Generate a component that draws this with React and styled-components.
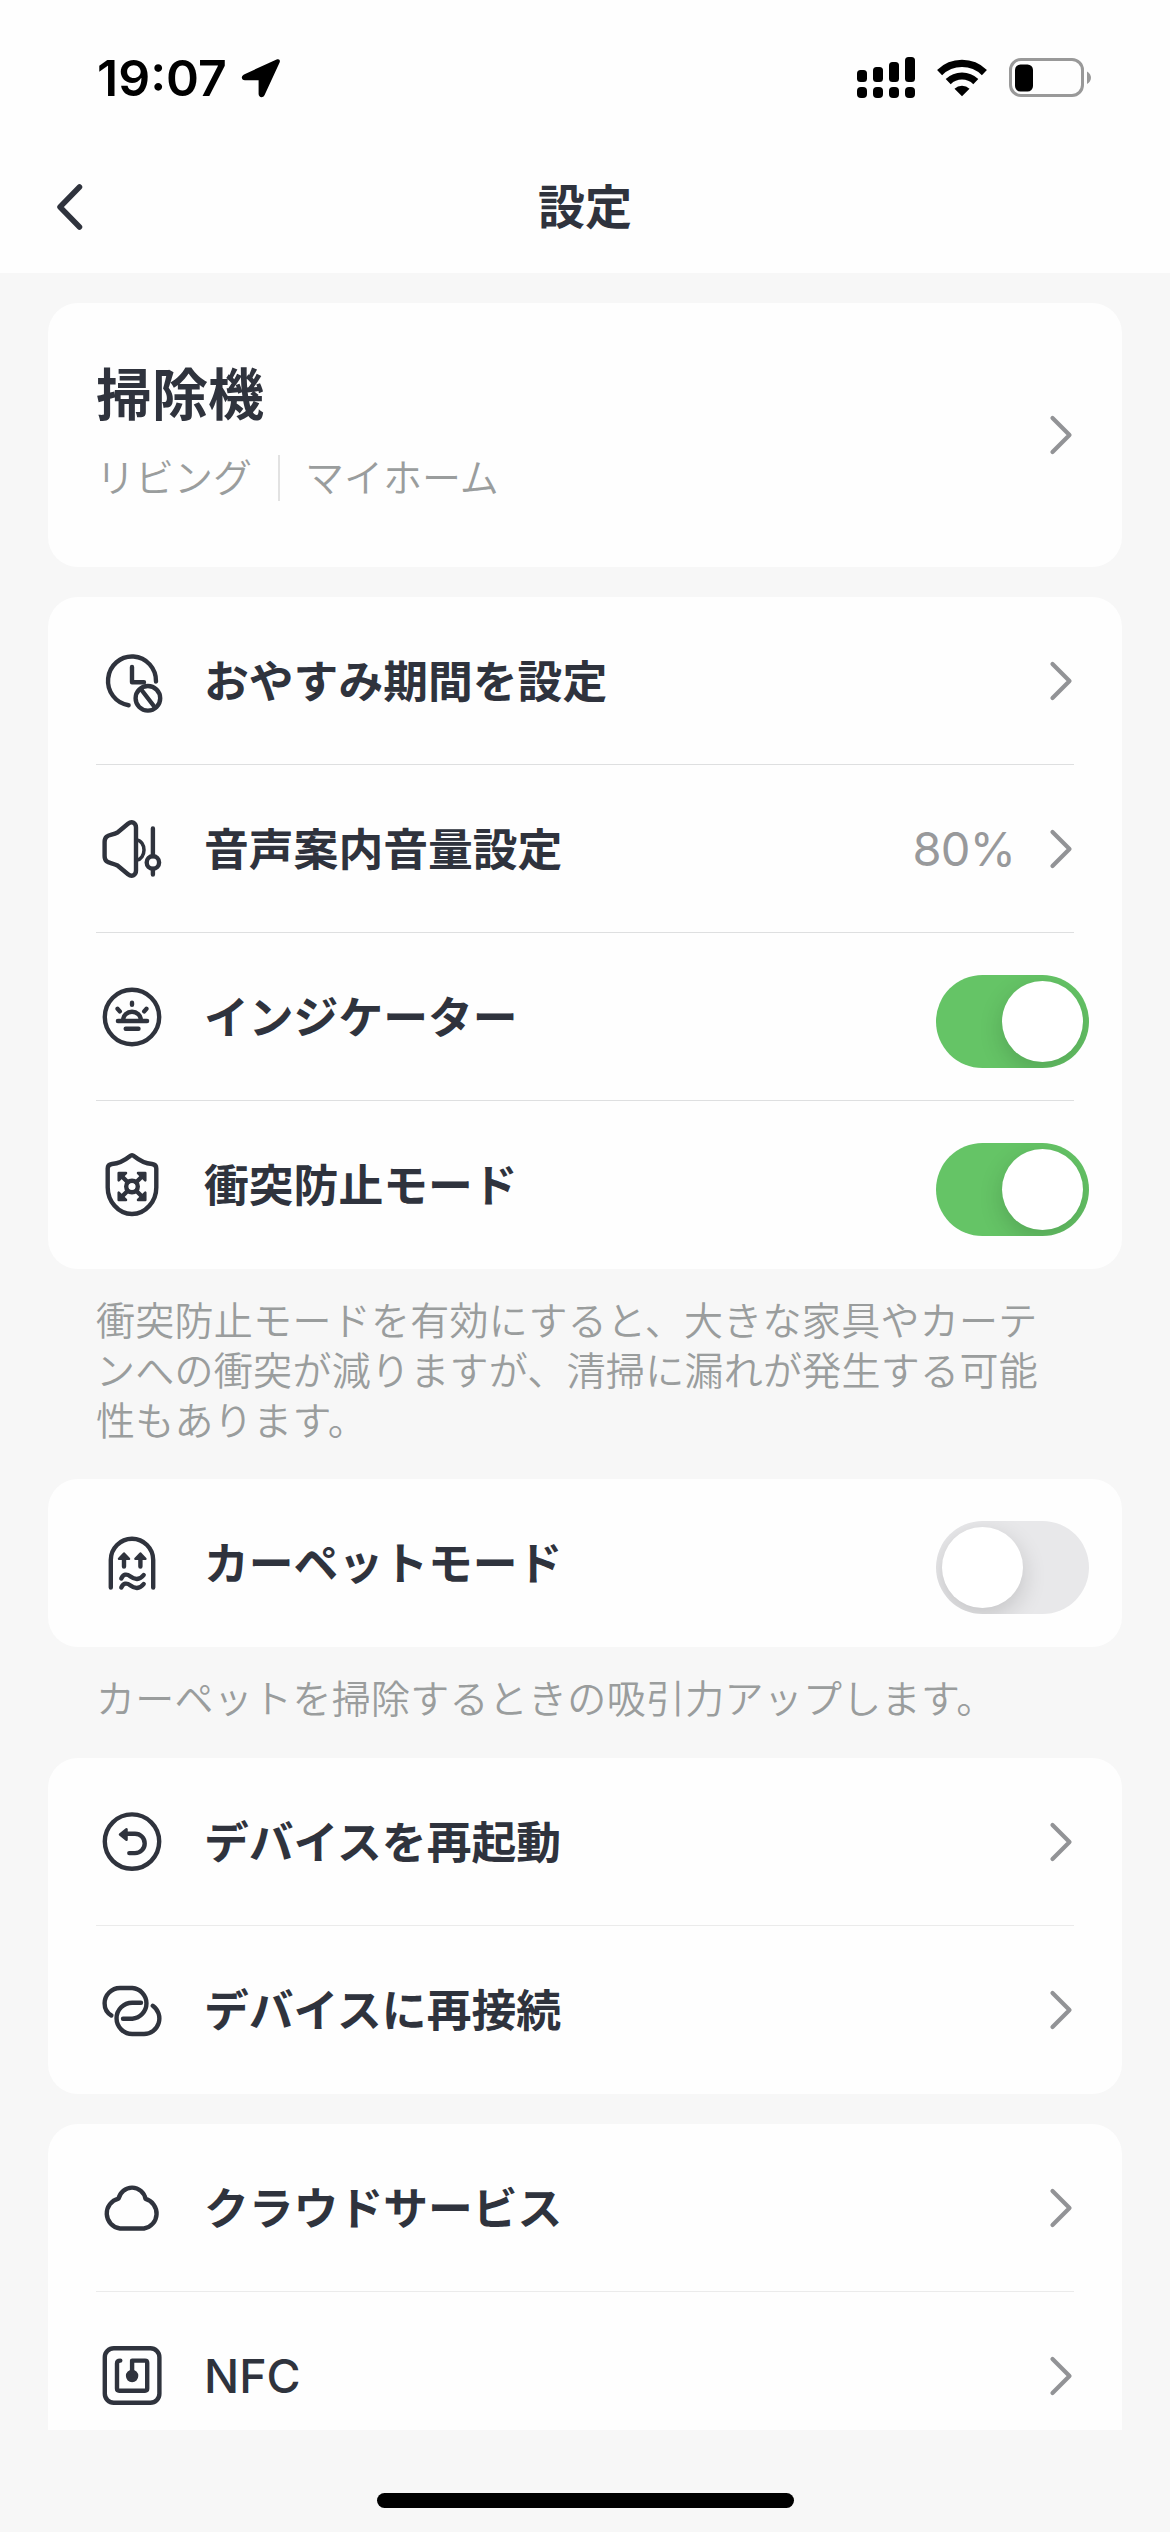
import React from "react";
import styled, { createGlobalStyle } from "styled-components";

const INK = "#2f333d";
const MUTED = "#9a9d9d";

const GlobalStyle = createGlobalStyle`
  * { box-sizing: border-box; }
  body {
    margin: 0;
    background: #f7f7f7;
    font-family: "Inter", "Noto Sans CJK JP", sans-serif;
    color: ${INK};
  }
`;

const Screen = styled.div`
  width: 1170px;
  height: 2532px;
  display: flex;
  flex-direction: column;
  overflow: hidden;
  background: #f7f7f7;
`;

const Header = styled.header`
  height: 273px;
  flex: none;
  background: #fefefe;
`;

const StatusBar = styled.div`
  height: 141px;
  padding: 15px 78px 0 97px;
  display: flex;
  align-items: center;
  justify-content: space-between;
`;

const StatusGroup = styled.div`
  display: flex;
  align-items: center;
  gap: ${(p) => p.$gap}px;
`;

const Clock = styled.span`
  font-size: 50px;
  font-weight: 600;
  line-height: 60px;
  letter-spacing: 0;
  color: #000;
`;

const NavBar = styled.div`
  height: 132px;
  padding: 0 48px;
  display: grid;
  grid-template-columns: 60px 1fr 60px;
  align-items: center;
`;

const BackButton = styled.button`
  display: flex;
  padding: 0;
  border: 0;
  background: none;
`;

const Title = styled.h1`
  margin: 0;
  text-align: center;
  font-size: 47px;
  line-height: 60px;
  font-weight: 600;
`;

const ScrollArea = styled.main`
  height: 2157px;
  flex: none;
  overflow: hidden;
  padding: 30px 48px 0;
`;

const Card = styled.section`
  background: #fefefe;
  border-radius: 30px;
  margin-bottom: ${(p) => p.$gap ?? 30}px;
`;

const DeviceCard = styled(Card)`
  height: 264px;
  padding: 0 48px;
  display: flex;
  align-items: center;
  justify-content: space-between;
`;

const DeviceInfo = styled.div`
  display: flex;
  flex-direction: column;
  gap: 26px;
  padding-bottom: 5px;
`;

const DeviceName = styled.h2`
  margin: 0;
  font-size: 56px;
  line-height: 64px;
  font-weight: 600;
`;

const Places = styled.div`
  display: flex;
  align-items: center;
  font-size: 39px;
  line-height: 50px;
  font-weight: 350;
  color: ${MUTED};
`;

const PlaceRule = styled.span`
  width: 2px;
  height: 46px;
  margin: 0 25px 0 26px;
  background: #e2e2e2;
`;

const Row = styled.div`
  height: 168px;
  padding: 0 33px 0 48px;
  display: flex;
  align-items: center;
`;

const Divider = styled.hr`
  height: 1px;
  margin: -1px 48px 0;
  border: 0;
  background: ${(p) => (p.$soft ? "#ebebeb" : "#dedfe0")};
`;

const IconBox = styled.svg`
  width: 72px;
  height: 72px;
  flex: none;
  margin-right: 36px;
  fill: none;
  stroke: ${INK};
  stroke-width: 4.4;
  stroke-linecap: round;
  stroke-linejoin: round;
`;

const Label = styled.span`
  flex: 1;
  padding-top: ${(p) => (p.$latin ? 0 : 2)}px;
  font-size: ${(p) => (p.$latin ? 46.5 : 44.8)}px;
  line-height: 60px;
  font-weight: ${(p) => (p.$latin ? 500 : 600)};
`;

const Value = styled.span`
  margin-right: 32px;
  font-size: 47px;
  letter-spacing: -0.8px;
  line-height: 60px;
  color: #98999b;
`;

const ChevronBox = styled.span`
  display: flex;
  margin-right: ${(p) => p.$inset ?? 15}px;
`;

const Track = styled.span`
  width: 153px;
  height: 93px;
  margin-top: 9px;
  padding: 6px;
  display: flex;
  justify-content: ${(p) => (p.$on ? "flex-end" : "flex-start")};
  border-radius: 47px;
  overflow: hidden;
  background: ${(p) => (p.$on ? "#65c466" : "#e8e8ea")};
`;

const Knob = styled.span`
  width: 81px;
  height: 81px;
  border-radius: 50%;
  background: #fff;
  box-shadow: 0 8px 24px rgba(0, 0, 0, 0.16);
`;

const Note = styled.p`
  margin: 0;
  padding: 27px 70px ${(p) => p.$tail}px 48px;
  font-size: 39px;
  letter-spacing: 0.28px;
  line-height: 50px;
  font-weight: 350;
  color: ${MUTED};
`;

const HomeArea = styled.footer`
  flex: 1;
  display: flex;
  justify-content: center;
  align-items: flex-end;
  padding-bottom: 24px;
`;

const HomeIndicator = styled.span`
  width: 417px;
  height: 15px;
  border-radius: 8px;
  background: #000;
`;

const LocationArrow = () => (
  <svg width="40" height="40" viewBox="0 0 40 40">
    <path
      d="M35.6 1.5 3 16.4C-.3 18 .2 22.300 4 22.300H17.600V36c0 3.700 4.500 4.300 6 1L38.600 4.500C39.600 2 38 .4 35.600 1.500Z"
      fill="#000"
    />
  </svg>
);

const Signal = () => (
  <svg width="58" height="42" viewBox="0 0 58 42">
    {[13, 10, 5, 0].map((top, i) => (
      <g key={top}>
        <rect x={i * 16} y={top} width="10" height={25 - top} rx="3.5" />
        <rect x={i * 16} y="30" width="10" height="11" rx="4" />
      </g>
    ))}
  </svg>
);

const Wifi = () => (
  <svg width="50" height="38" viewBox="0 0 50 38">
    <g fill="none" stroke="#000" strokeWidth="7.200">
      <path d="M2.600 13.600a32 32 0 0 1 44.800 0" />
      <path d="M11.200 22.600a19.800 19.800 0 0 1 27.600 0" />
    </g>
    <path d="M25 37.300 17.500 29.700a11 11 0 0 1 15 0Z" />
  </svg>
);

const Battery = () => (
  <svg width="83" height="40" viewBox="0 0 83 40">
    <rect x="1.500" y="1.500" width="72" height="36" rx="10.500" fill="none" stroke="#999" strokeWidth="3" />
    <rect x="6" y="6.500" width="18" height="27" rx="5.500" />
    <path d="M78 13.500c5.300 2.500 5.300 10 0 12.500Z" fill="#999" />
  </svg>
);

const BackChevron = () => (
  <svg width="40" height="48" viewBox="0 0 40 48">
    <path d="M31.500 4 12 24l19.500 20" fill="none" stroke={INK} strokeWidth="5.500" strokeLinecap="round" strokeLinejoin="round" />
  </svg>
);

const Chevron = ({ inset }) => (
  <ChevronBox $inset={inset}>
    <svg width="27" height="42" viewBox="0 0 27 42">
      <path d="M5.500 4 22.500 21 5.500 38" fill="none" stroke="#929396" strokeWidth="4.200" strokeLinecap="round" strokeLinejoin="round" />
    </svg>
  </ChevronBox>
);

const Toggle = ({ on }) => (
  <Track $on={on} role="switch" aria-checked={on}>
    <Knob />
  </Track>
);

const Icon = ({ children }) => <IconBox viewBox="0 0 72 72">{children}</IconBox>;

const icons = {
  sleep: (
    <>
      <path d="M60 36.500A24 24.500 0 1 0 32.600 60.200" />
      <path d="M36 22v15.300h12" />
      <circle cx="51.900" cy="53.300" r="12.300" />
      <path d="M44.800 44 59 62.500" />
    </>
  ),
  volume: (
    <>
      <path d="M8.600 29C8.600 21 15 23 21.500 19.500L32 10.800C36 7.500 40 10 40 14.500V57.500C40 62 36 64.500 32 61.200L21.500 52.500C15 49 8.600 51 8.600 43Z" />
      <path d="M41 27C45 27.500 48 32 48 37S45 46.500 41 47" strokeWidth="3.500" />
      <path d="M56.900 15.500V43M56.900 56V61.500" />
      <circle cx="56.900" cy="49.500" r="6.200" />
    </>
  ),
  light: (
    <>
      <circle cx="36" cy="36" r="27.200" />
      <path d="M21.900 40H51.100M29.700 47.700H42.500M36 21.800v2M21.600 27.800l2.200 2.600M50.400 27.800l-2.200 2.600" />
      <path d="M27.200 39a8.800 8.300 0 0 1 17.600 0" />
    </>
  ),
  shield: (
    <>
      <path d="M33.800 7.200Q36 5.200 38.200 7.200C43.500 11.500 48 14.300 56 15Q60.300 15.500 60.300 19.500V38.500C60.300 52 50 65 36 65S11.700 52 11.700 38.500V19.500Q11.700 15.500 16 15C24 14.300 28.500 11.500 33.800 7.200Z" />
      <circle cx="36" cy="37.500" r="5.800" />
      <path d="M25 26.500l6.800 6.800M47 26.500l-6.800 6.800M25 48.500l6.800-6.800M47 48.500l-6.800-6.800" />
      <g fill={INK} strokeWidth="2.500">
        <path d="M22.700 24h7.300l-7.300 7.300ZM49.300 24H42l7.300 7.300ZM22.700 51h7.300l-7.300-7.300ZM49.300 51H42l7.300-7.300Z" />
      </g>
    </>
  ),
  carpet: (
    <>
      <path d="M14.800 60.500V33a21.200 21.200 0 0 1 42.400 0V60.500" />
      <path d="M28 33v6.500M44.400 33v6.500" />
      <path d="M28 26.500 33 31.800H23ZM44.400 26.500 49.400 31.800H39.400Z" fill={INK} strokeWidth="2.500" />
      <path d="M25.300 51.500C27.500 47 30.500 46.500 34.500 49.500S43.500 53.500 47.700 48M25.300 60.500C27.500 56 30.500 55.500 34.500 58.500S43.500 62.500 47.700 57" />
    </>
  ),
  restart: (
    <>
      <circle cx="36" cy="35.600" r="27.200" />
      <path d="M30 27.700H39a9.700 9.700 0 0 1 0 19.400H33.300" />
      <path d="M24 28.500 30.500 23.300V33.700Z" fill={INK} strokeWidth="2.500" />
    </>
  ),
  link: (
    <>
      <path d="M15.400 41.500C11 39 8.600 34.500 8.600 29.300A15.400 15.400 0 0 1 24 14H36.300A15.400 15.400 0 0 1 36.300 44.700H27" />
      <path d="M45 28.700H36.200A15.600 15.600 0 0 0 36.200 60H48A15.600 15.600 0 0 0 56.800 31.700" />
    </>
  ),
  cloud: (
    <path d="M24 56.500H48A15.200 15.200 0 0 0 49.500 26.900A13.700 13.700 0 0 0 22.600 26.600A15.200 15.200 0 0 0 24 56.500Z" />
  ),
  nfc: (
    <>
      <rect x="8.800" y="8.200" width="54.600" height="54.600" rx="9" />
      <path d="M24.300 20.600Q21 20.600 21 23.500V48.500Q21 50.700 23.200 50.700H49Q51.200 50.700 51.200 48.500V22.800Q51.200 20.600 49 20.600H36.100V36" />
      <circle cx="36.100" cy="36" r="4" fill={INK} />
    </>
  ),
};

const Item = ({ icon, label, latin, value, toggle }) => (
  <Row>
    <Icon>{icons[icon]}</Icon>
    <Label $latin={latin}>{label}</Label>
    {value && <Value>{value}</Value>}
    {toggle === undefined ? <Chevron /> : <Toggle on={toggle} />}
  </Row>
);

export default function App() {
  return (
    <Screen lang="ja">
      <GlobalStyle />
      <Header>
        <StatusBar>
          <StatusGroup $gap={14}>
            <Clock>19:07</Clock>
            <LocationArrow />
          </StatusGroup>
          <StatusGroup $gap={22}>
            <Signal />
            <Wifi />
            <Battery />
          </StatusGroup>
        </StatusBar>
        <NavBar>
          <BackButton aria-label="戻る">
            <BackChevron />
          </BackButton>
          <Title>設定</Title>
        </NavBar>
      </Header>
      <ScrollArea>
        <DeviceCard>
          <DeviceInfo>
            <DeviceName>掃除機</DeviceName>
            <Places>
              <span>リビング</span>
              <PlaceRule />
              <span>マイホーム</span>
            </Places>
          </DeviceInfo>
          <Chevron inset={0} />
        </DeviceCard>
        <Card $gap={0}>
          <Item icon="sleep" label="おやすみ期間を設定" />
          <Divider />
          <Item icon="volume" label="音声案内音量設定" value="80%" />
          <Divider />
          <Item icon="light" label="インジケーター" toggle={true} />
          <Divider />
          <Item icon="shield" label="衝突防止モード" toggle={true} />
        </Card>
        <Note $tail={33}>
          衝突防止モードを有効にすると、大きな家具やカーテ
          <br />
          ンへの衝突が減りますが、清掃に漏れが発生する可能
          <br />
          性もあります。
        </Note>
        <Card $gap={0}>
          <Item icon="carpet" label="カーペットモード" toggle={false} />
        </Card>
        <Note $tail={34}>カーペットを掃除するときの吸引力アップします。</Note>
        <Card>
          <Item icon="restart" label="デバイスを再起動" />
          <Divider $soft />
          <Item icon="link" label="デバイスに再接続" />
        </Card>
        <Card>
          <Item icon="cloud" label="クラウドサービス" />
          <Divider $soft />
          <Item icon="nfc" label="NFC" latin />
        </Card>
      </ScrollArea>
      <HomeArea>
        <HomeIndicator />
      </HomeArea>
    </Screen>
  );
}
